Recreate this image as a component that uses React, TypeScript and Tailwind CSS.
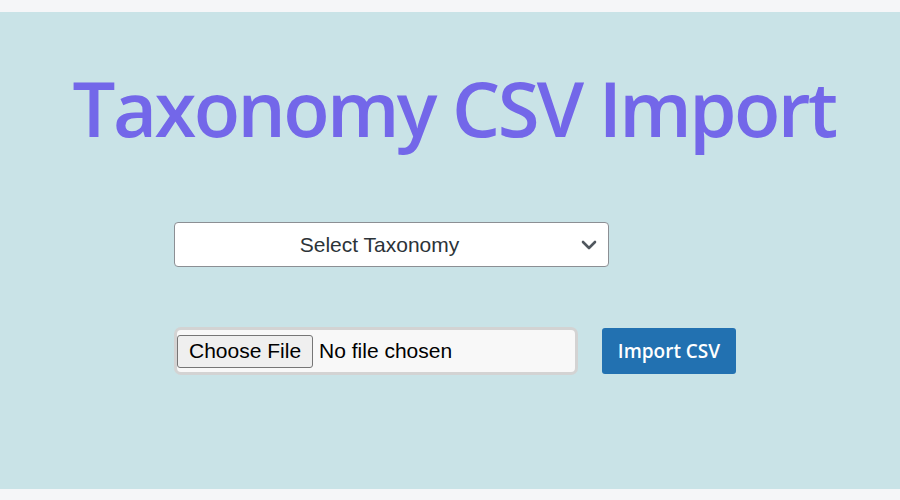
export default function App() {
  return (
    <div className="min-h-[500px] bg-[#f5f6f8] pt-[12px]" style={{ fontFamily: '"Liberation Sans", Arial, sans-serif' }}>
      <div className="h-[477px] bg-[#c9e3e7] pt-[58px]">
        <h1
          className="text-center text-[76px] leading-[76px] font-semibold tracking-[-2.6px] text-[#7367e9] pl-[8px]"
          style={{ fontFamily: '"Open Sans", "Noto Sans", sans-serif' }}
        >
          Taxonomy CSV Import
        </h1>
        <div className="pl-[174px] pt-[76px]">
          <div className="relative flex h-[45px] w-[435px] items-center justify-center rounded-[4px] border border-[#8c8f94] bg-white pl-[8px] pr-[32px]">
            <span className="text-[21px] text-[#2c3338]">Select Taxonomy</span>
            <svg className="absolute right-[11px] top-[17px]" width="16" height="10" viewBox="0 0 16 10">
              <path d="M2 2 L8 8 L14 2" fill="none" stroke="#50575e" strokeWidth="2.6" strokeLinecap="round" strokeLinejoin="round" />
            </svg>
          </div>
          <div className="mt-[60px] flex items-center gap-[24px]">
            <div className="flex h-[48px] w-[404px] items-center rounded-[7px] border-[3px] border-[#d3d3d3] bg-[#f8f8f8]">
              <span className="flex h-[33px] items-center rounded-[3px] border border-[#767676] bg-[#efefef] px-[11px] text-[21px] text-black">
                Choose File
              </span>
              <span className="ml-[6px] text-[21px] text-black">No file chosen</span>
            </div>
            <button
              className="h-[46px] w-[134px] rounded-[3px] bg-[#2271b1] text-[19px] font-semibold text-white"
              style={{ fontFamily: '"Open Sans", "Noto Sans", sans-serif' }}
            >
              Import CSV
            </button>
          </div>
        </div>
      </div>
    </div>
  );
}
